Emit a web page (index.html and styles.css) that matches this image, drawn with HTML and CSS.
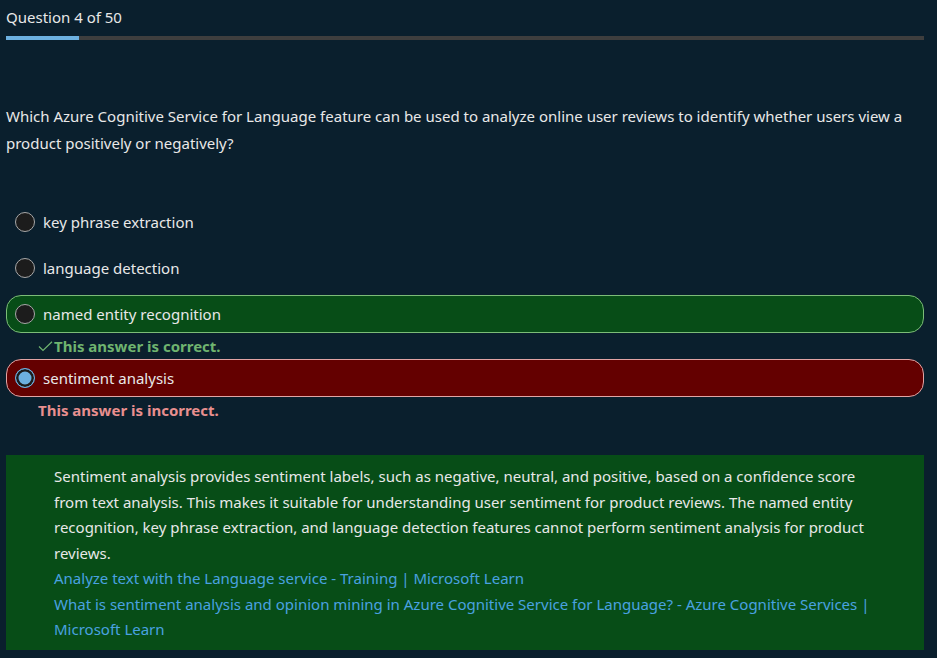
FILE: index.html
```html
<!DOCTYPE html>
<html lang="en">
<head>
  <meta charset="UTF-8" />
  <title>Question 4 of 50</title>
  <link rel="stylesheet" href="styles.css">
</head>
<body>
  <div class="quiz">
    <div class="counter">Question 4 of 50</div>
    <div class="progress"><div class="progress-fill" style="width: 8%"></div></div>

    <p class="question">Which Azure Cognitive Service for Language feature can be used to analyze online user reviews to identify whether users view a product positively or negatively?</p>

    <div class="options">
      <div class="option">
        <span class="radio"></span>
        <span class="label">key phrase extraction</span>
      </div>
      <div class="option">
        <span class="radio"></span>
        <span class="label">language detection</span>
      </div>
      <div class="option correct">
        <span class="radio"></span>
        <span class="label">named entity recognition</span>
      </div>
      <div class="feedback good">
        <svg class="check" width="15" height="11" viewBox="0 0 15 11"><polyline points="1,5.5 5,9.5 14,0.8" fill="none" stroke="currentColor" stroke-width="1.2"/></svg>This answer is correct.
      </div>
      <div class="option wrong">
        <span class="radio checked"></span>
        <span class="label">sentiment analysis</span>
      </div>
      <div class="feedback bad">This answer is incorrect.</div>
    </div>

    <div class="explanation">
      <p>Sentiment analysis provides sentiment labels, such as negative, neutral, and positive, based on a confidence score from text analysis. This makes it suitable for understanding user sentiment for product reviews. The named entity recognition, key phrase extraction, and language detection features cannot perform sentiment analysis for product reviews.</p>
      <a href="#">Analyze text with the Language service - Training | Microsoft Learn</a>
      <a href="#">What is sentiment analysis and opinion mining in Azure Cognitive Service for Language? - Azure Cognitive Services | Microsoft Learn</a>
    </div>
  </div>
</body>
</html>
```

FILE: styles.css
```css
body {
  margin: 0;
  background-color: #0a1f2d;
  color: #e8e8e8;
  font-family: "Noto Sans", sans-serif;
  font-size: 15px;
}
.quiz {
  padding: 6px 13px 8px 6px;
}
.counter {
  line-height: 22px;
}
.progress {
  margin-top: 8px;
  height: 4px;
  background-color: #3e3e3e;
}
.progress-fill {
  height: 100%;
  background-color: #6cb0e0;
}
.question {
  margin: 63px 0 0 0;
  line-height: 27px;
}
.options {
  margin-top: 46px;
  display: flex;
  flex-direction: column;
}
.option {
  box-sizing: border-box;
  display: flex;
  align-items: center;
  gap: 8px;
  height: 38px;
  padding: 0 8px;
  border: 1px solid transparent;
  border-radius: 15px;
  margin-bottom: 8px;
}
.option.correct {
  background-color: #074d17;
  border-color: #7cbc78;
  margin-bottom: 0;
}
.option.wrong {
  background-color: #640000;
  border-color: #e2a4a4;
  margin-bottom: 0;
}
.radio {
  box-sizing: border-box;
  width: 20px;
  height: 20px;
  border-radius: 50%;
  border: 1.5px solid #a8a8a8;
  background-color: #1c1c1c;
  flex-shrink: 0;
}
.radio.checked {
  border-color: #6cb0e0;
  background-color: #6cb0e0;
  box-shadow: inset 0 0 0 2.5px #1c1c1c;
}
.label {
  line-height: 20px;
}
.feedback {
  display: flex;
  align-items: center;
  font-weight: bold;
  padding-left: 32px;
  line-height: 26px;
}
.feedback.good {
  color: #6fb46f;
}
.check {
  margin: 1px 1px 0 0;
}
.feedback.bad {
  color: #e88f8f;
}
.explanation {
  margin-top: 32px;
  background-color: #074d17;
  padding: 9px 48px 7px 48px;
  line-height: 25.5px;
}
.explanation p {
  margin: 0;
}
.explanation a {
  display: block;
  color: #4aa2e0;
  text-decoration: none;
}
```
